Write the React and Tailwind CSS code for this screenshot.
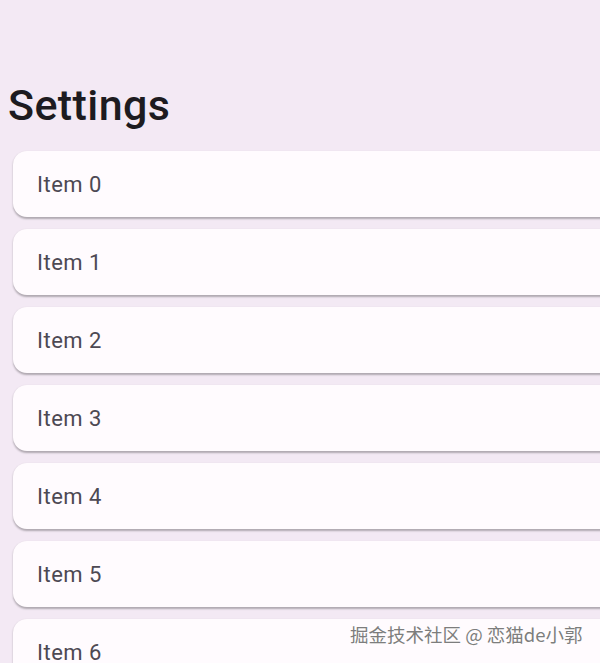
export default function App() {
  const items = [0, 1, 2, 3, 4, 5, 6];
  return (
    <div className="relative w-[600px] h-[663px] overflow-hidden bg-[#f3e9f4]" style={{ fontFamily: "Roboto, 'Noto Sans', sans-serif" }}>
      <div className="pt-[79px] pl-[8px]">
        <h1 className="text-[43px] leading-[52px] font-medium text-[#1d1b20] tracking-[0.4px]">Settings</h1>
      </div>
      <div className="flex flex-col gap-[12px] mt-[20px] pl-[13px]">
        {items.map((i) => (
          <div
            key={i}
            className="w-[620px] h-[66px] shrink-0 rounded-[14px] bg-[#fffbfe] flex items-center pl-[24px] shadow-[0_1.5px_2px_rgba(0,0,0,0.28)]"
          >
            <span className="text-[22px] tracking-[0.5px] text-[#4d4953]">Item {i}</span>
          </div>
        ))}
      </div>
      <div
        className="absolute left-[350px] top-[622px] text-[18.5px] leading-[24px] text-[#7d7d7d]"
        style={{ fontFamily: "'Noto Sans CJK SC', 'Noto Sans', sans-serif", textShadow: "0 0 2px #fff, 0 0 1px #fff" }}
      >
        掘金技术社区 @ 恋猫de小郭
      </div>
    </div>
  );
}
